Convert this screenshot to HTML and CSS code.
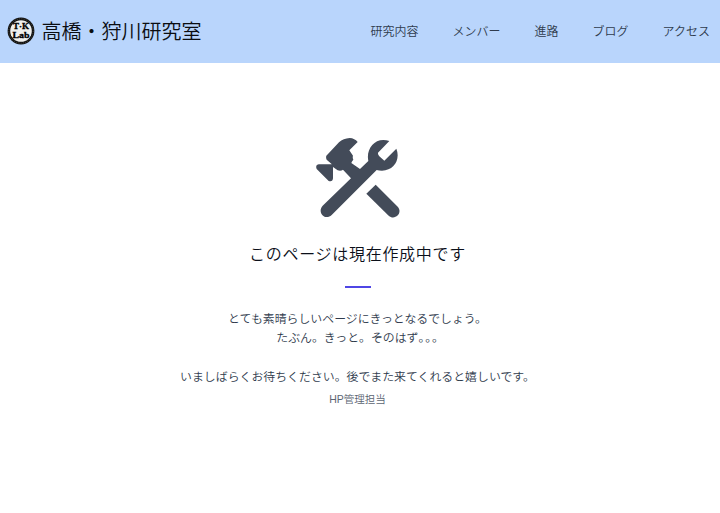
FILE: index.html
```html
<!DOCTYPE html>
<html lang="ja">
<head>
<meta charset="utf-8">
<title>高橋・狩川研究室</title>
<link rel="stylesheet" href="styles.css">
</head>
<body>
<header class="header">
  <a class="brand">
    <svg class="logo" viewBox="0 0 28 28">
      <circle cx="14" cy="14" r="13.4" fill="#111"/>
      <circle cx="14" cy="14" r="12.2" fill="none" stroke="#77776a" stroke-width=".6" stroke-dasharray="1 1.3"/>
      <circle cx="14" cy="14" r="10.8" fill="#f0f0ee"/>
      <text x="14" y="12.4" textLength="16" lengthAdjust="spacingAndGlyphs">T·K</text>
      <text x="14" y="20.8" textLength="17" lengthAdjust="spacingAndGlyphs">Lab</text>
    </svg>
    <span class="name">高橋・狩川研究室</span>
  </a>
  <nav class="nav">
    <a>研究内容</a><a>メンバー</a><a>進路</a><a>ブログ</a><a>アクセス</a>
  </nav>
</header>
<main class="main">
  <svg class="tools" viewBox="45 36 258 246" fill="#434b59">
    <path d="M79 92L117 52Q130 40 149 39Q164 40 173 51L148 76L159 92Q157 98 160 104Q155 109 154 114L180 132L205 108C198 76 219 45 250 45Q259 45 268 48L234 83Q233 89 238 94L253 107L289 71C302 103 282 137 246 137Q237 137 230 135L95 270C76 288 50 263 68 242L153 160L129 134Q123 139 113 136L99 126V160Q98 172 86 168L50 132Q45 120 56 118H97L99 121L80 104Q77 98 79 92Z"/>
    <path d="M227 179L293 245C310 264 284 288 266 272L199 206Z"/>
  </svg>
  <h1 class="title">このページは現在作成中です</h1>
  <div class="rule"></div>
  <p class="message">とても素晴らしいページにきっとなるでしょう。<br>たぶん。きっと。そのはず<span class="dots">。。。</span><br><br>いましばらくお待ちください。後でまた来てくれると嬉しいです。</p>
  <p class="sign">HP管理担当</p>
</main>
</body>
</html>
```
FILE: styles.css
```css
* { box-sizing: border-box; }
body {
  margin: 0;
  background: #fff;
  color: #2f3b4d;
  font-family: "Noto Sans CJK JP", sans-serif;
  font-weight: 350;
  white-space: nowrap;
}
.header {
  display: flex;
  align-items: center;
  justify-content: space-between;
  height: 63px;
  padding: 0 10px 1px 6.5px;
  background: #b9d5fc;
}
.brand { display: flex; align-items: center; gap: 7px; }
.logo { width: 28px; height: 28px; }
.logo text {
  font: bold 8px "Liberation Serif", serif;
  text-anchor: middle;
  fill: #000;
  stroke: #000;
  stroke-width: .3px;
}
.name { font-size: 20px; line-height: 28px; color: #0b0d11; }
.nav { display: flex; gap: 34px; font-size: 12px; line-height: 20px; padding-bottom: 1px; }
.main {
  display: flex;
  flex-direction: column;
  align-items: center;
  width: 715px;
  padding-top: 74px;
}
.tools { width: 86px; height: 82px; }
.title {
  margin: 22px 0 0;
  font-size: 16px;
  line-height: 24px;
  font-weight: 350;
  letter-spacing: .7px;
  color: #0b0f19;
}
.rule { width: 26px; height: 2px; margin-top: 21px; background: #4f46e5; }
.message {
  margin: 19.5px 0 0;
  font-size: 11.9px;
  line-height: 19.5px;
  text-align: center;
}
.dots { font-feature-settings: "halt"; letter-spacing: .8px; }
.sign {
  margin: 5.5px 0 0;
  font-family: "Liberation Sans", "Noto Sans CJK JP", sans-serif;
  font-size: 10.5px;
  line-height: 16px;
  color: #5b6472;
}
```
